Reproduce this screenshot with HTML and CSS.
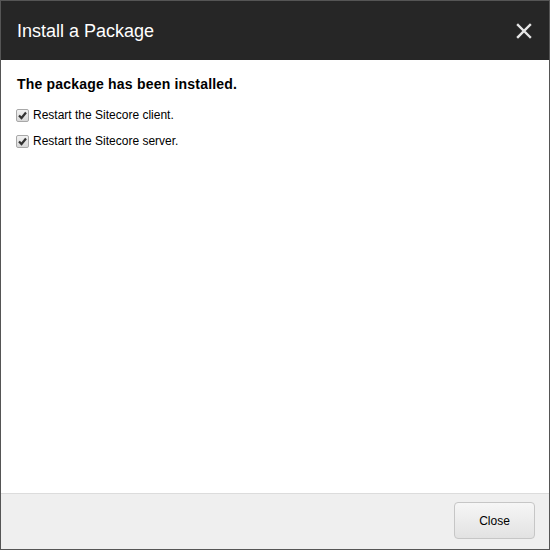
FILE: index.html
```html
<!DOCTYPE html>
<html>
<head>
<meta charset="utf-8">
<link rel="stylesheet" href="styles.css">
</head>
<body>
<div class="dialog">
  <div class="header">
    <h1 class="title">Install a Package</h1>
    <button class="close-x" aria-label="Close">
      <svg width="16" height="16" viewBox="0 0 16 16"><path d="M2 2 L14 14 M14 2 L2 14" stroke="#e6e6e6" stroke-width="2.4" stroke-linecap="square"/></svg>
    </button>
  </div>
  <div class="content">
    <h2 class="heading">The package has been installed.</h2>
    <label class="row"><span class="check"><svg width="11" height="11" viewBox="0 0 11 11"><path d="M2 5.5 L4.5 8 L9 2.5" fill="none" stroke="#333" stroke-width="2.2"/></svg></span>Restart the Sitecore client.</label>
    <label class="row"><span class="check"><svg width="11" height="11" viewBox="0 0 11 11"><path d="M2 5.5 L4.5 8 L9 2.5" fill="none" stroke="#333" stroke-width="2.2"/></svg></span>Restart the Sitecore server.</label>
  </div>
  <div class="footer">
    <button class="btn">Close</button>
  </div>
</div>
</body>
</html>
```
FILE: styles.css
```css
*, *::before, *::after {
  box-sizing: border-box;
}
html, body {
  margin: 0;
  padding: 0;
  background: #fff;
}
.dialog {
  width: 550px;
  height: 550px;
  border: 1px solid #555;
  display: flex;
  flex-direction: column;
  font-family: "Liberation Sans", Arial, sans-serif;
}
.header {
  height: 59px;
  flex: none;
  background: #262626;
  display: flex;
  align-items: center;
  justify-content: space-between;
  padding: 1px 17px 0 16px;
}
.title {
  margin: 0;
  font-size: 18px;
  font-weight: normal;
  color: #fff;
}
.close-x {
  border: 0;
  background: none;
  padding: 0;
  width: 16px;
  height: 16px;
  display: flex;
}
.content {
  flex: 1;
  padding: 16px 16px 0;
}
.heading {
  margin: 0 0 9px;
  font-size: 14px;
  font-weight: bold;
  color: #000;
  line-height: 17px;
  letter-spacing: 0.2px;
}
.row {
  display: flex;
  align-items: center;
  height: 26px;
  font-size: 12px;
  color: #000;
}
.check {
  width: 13px;
  height: 13px;
  border: 1px solid #a8a8a8;
  border-radius: 2px;
  background: linear-gradient(#f2f2f2, #d8d8d8);
  margin-left: -1px;
  margin-right: 4px;
  display: flex;
}
.footer {
  height: 56px;
  flex: none;
  border-top: 1px solid #dcdcdc;
  background: #efefef;
  display: flex;
  justify-content: flex-end;
  align-items: flex-start;
  padding: 8px 14px 0 0;
}
.btn {
  width: 81px;
  height: 37px;
  border: 1px solid #c6c6c6;
  border-radius: 4px;
  background: linear-gradient(#f6f6f6, #e2e2e2);
  font-family: "Liberation Sans", Arial, sans-serif;
  font-size: 12px;
  color: #000;
}
```
